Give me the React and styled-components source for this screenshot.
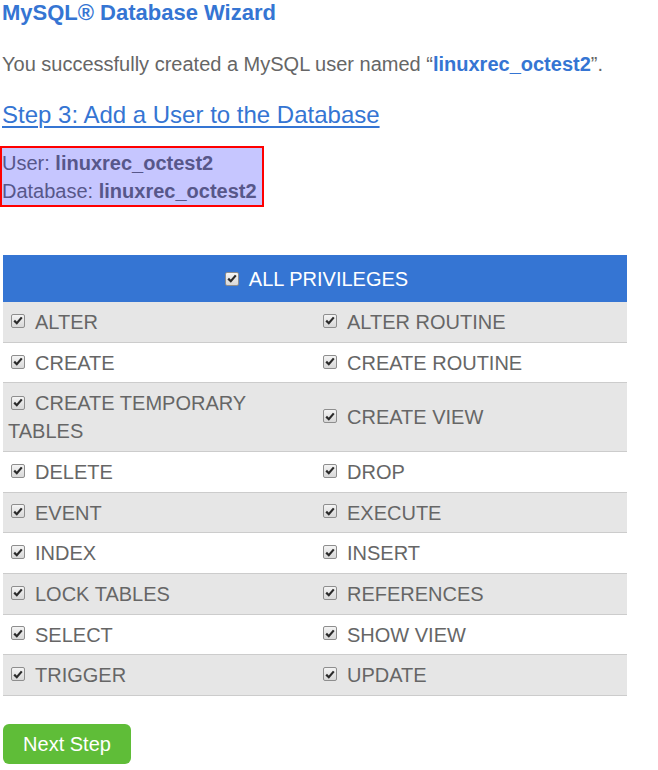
import React from "react";
import styled, { createGlobalStyle } from "styled-components";

const Global = createGlobalStyle`
  html, body { margin: 0; padding: 0; background: #fff; }
  body { font-family: "Liberation Sans", Arial, sans-serif; color: #666; }
`;

const Page = styled.div`
  width: 658px;
  padding: 0 0 0 2px;
  box-sizing: border-box;
`;

const Title = styled.h1`
  margin: 0;
  font-size: 22px;
  line-height: 26px;
  font-weight: bold;
  color: #3575d3;
`;

const Message = styled.p`
  margin: 24px 0 0;
  font-size: 20px;
  line-height: 28px;
  color: #666;
`;

const Name = styled.strong`
  color: #3575d3;
`;

const StepLink = styled.a`
  display: inline-block;
  margin-top: 21px;
  font-size: 24px;
  line-height: 32px;
  color: #3575d3;
  text-decoration: underline;
  text-underline-offset: 3px;
  text-decoration-thickness: 2px;
  cursor: pointer;
`;

const InfoBox = styled.div`
  display: inline-block;
  margin: 15px 0 0 -2px;
  padding: 1px 5px 0 0;
  border: 2px solid #ff0000;
  background: #c6c6ff;
  font-size: 20px;
  line-height: 28px;
  color: #57578a;
`;

const Block = styled.div``;

const Table = styled.div`
  margin: 48px 0 0 1px;
  width: 624px;
`;

const Header = styled.div`
  background: #3575d3;
  color: #fff;
  text-align: center;
  font-size: 20px;
  line-height: 28px;
  padding: 10px 5px 9px;
`;

const Row = styled.div`
  display: grid;
  grid-template-columns: 1fr 1fr;
  background: ${(p) => (p.$shaded ? "#e6e6e6" : "#fff")};
  border-bottom: 1px solid #cccccc;
`;

const Cell = styled.div`
  display: flex;
  align-items: center;
  padding: 7px 5px 5px;
  font-size: 20px;
  line-height: 27.7px;
  color: #666;
`;

const WrapCell = styled.div`
  padding: 7px 5px 5px;
  font-size: 20px;
  line-height: 27.7px;
  color: #666;
`;

const CellText = styled.span``;

const Box = styled.span`
  display: inline-flex;
  align-items: center;
  justify-content: center;
  width: 14px;
  height: 14px;
  box-sizing: border-box;
  margin: 0 10px 0 3px;
  border: 1px solid #8e8e8e;
  border-radius: 2px;
  background: linear-gradient(#f4f4f4, #d8d8d8);
  vertical-align: 1px;
  position: relative;
  top: -2px;
  svg { display: block; }
`;

const Button = styled.button`
  margin: 28px 0 0 1px;
  width: 128px;
  height: 40px;
  border: none;
  border-radius: 6px;
  background: #5fbd38;
  color: #fff;
  font-family: "Liberation Sans", Arial, sans-serif;
  font-size: 20px;
  cursor: pointer;
`;

const Check = () => (
  <Box>
    <svg width="10" height="9" viewBox="0 0 10 9">
      <path d="M1.2 4.6 L3.8 7.2 L8.8 1.4" fill="none" stroke="#2a2a2a" strokeWidth="2.2" />
    </svg>
  </Box>
);

const rows = [
  ["ALTER", "ALTER ROUTINE"],
  ["CREATE", "CREATE ROUTINE"],
  ["CREATE TEMPORARY TABLES", "CREATE VIEW"],
  ["DELETE", "DROP"],
  ["EVENT", "EXECUTE"],
  ["INDEX", "INSERT"],
  ["LOCK TABLES", "REFERENCES"],
  ["SELECT", "SHOW VIEW"],
  ["TRIGGER", "UPDATE"],
];

export default function App() {
  return (
    <>
      <Global />
      <Page>
        <Title>MySQL® Database Wizard</Title>
        <Message>
          You successfully created a MySQL user named “<Name>linuxrec_octest2</Name>”.
        </Message>
        <StepLink>Step 3: Add a User to the Database</StepLink>
        <Block>
          <InfoBox>
            User: <strong>linuxrec_octest2</strong>
            <br />
            Database: <strong>linuxrec_octest2</strong>
          </InfoBox>
        </Block>
        <Table>
          <Header>
            <Check />
            ALL PRIVILEGES
          </Header>
          {rows.map(([a, b], i) => (
            <Row key={a} $shaded={i % 2 === 0}>
              {a.length > 20 ? (
                <WrapCell>
                  <Check />
                  {a}
                </WrapCell>
              ) : (
                <Cell>
                  <Check />
                  <CellText>{a}</CellText>
                </Cell>
              )}
              <Cell>
                <Check />
                <CellText>{b}</CellText>
              </Cell>
            </Row>
          ))}
        </Table>
        <Button>Next Step</Button>
      </Page>
    </>
  );
}
